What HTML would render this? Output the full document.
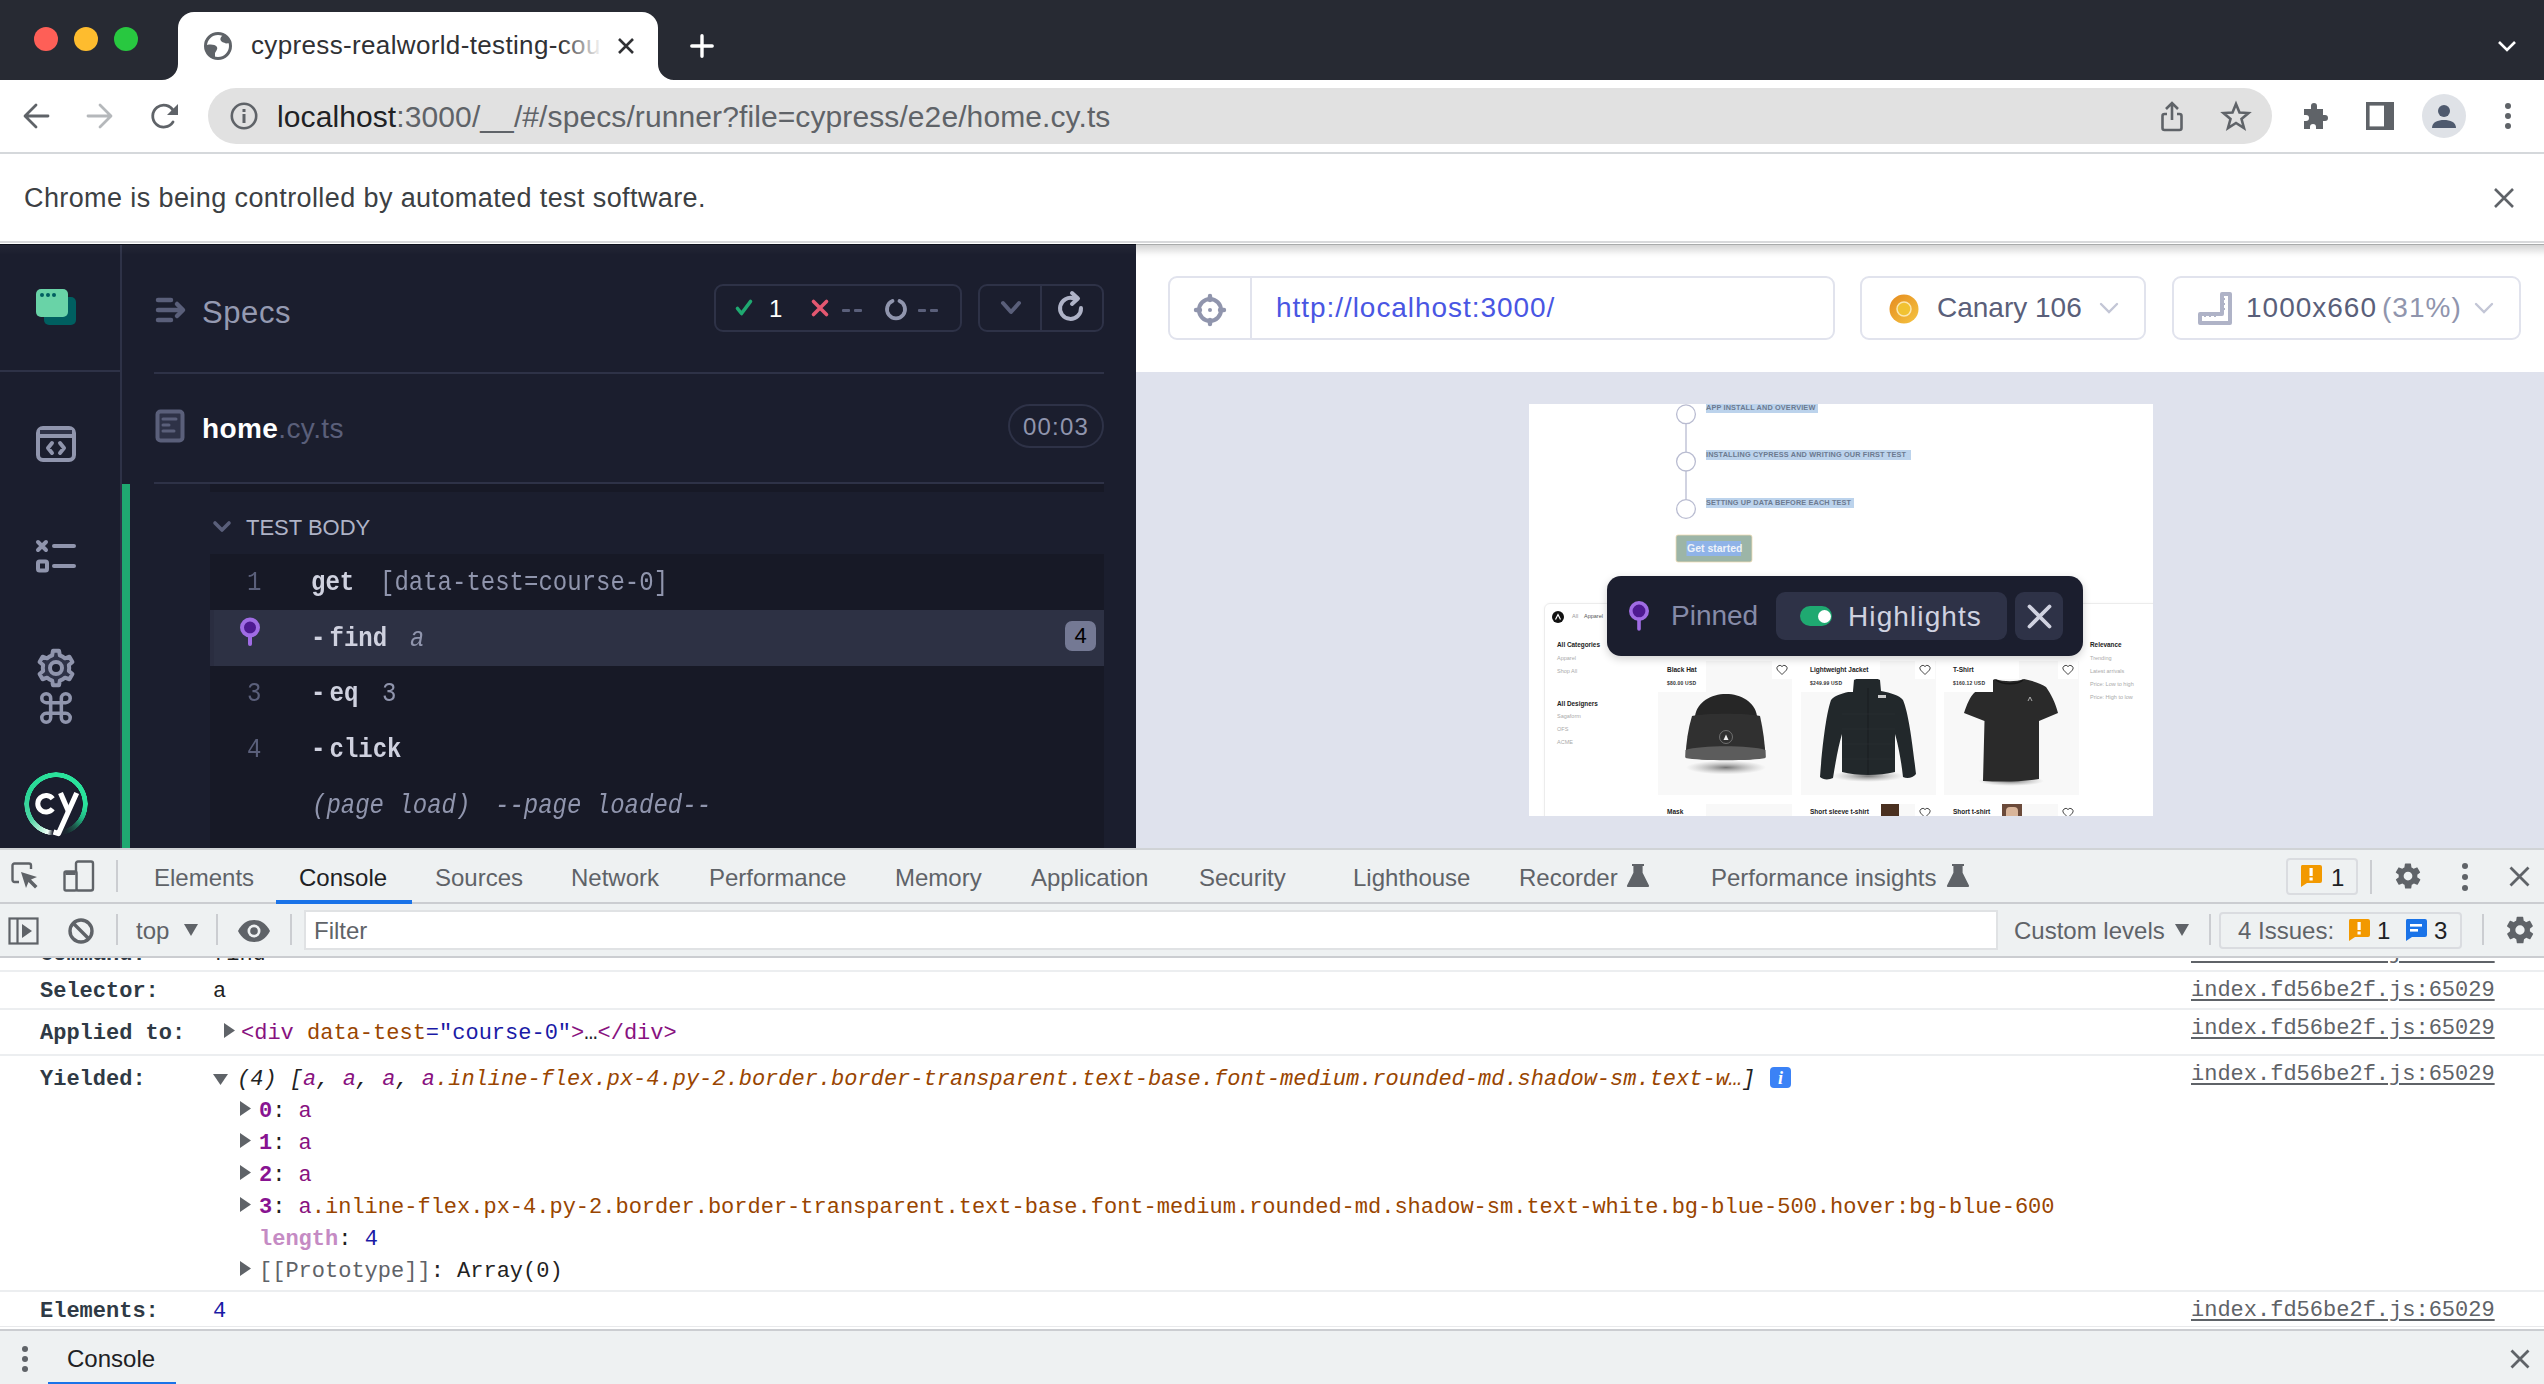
<!DOCTYPE html>
<html><head><meta charset="utf-8">
<style>
*{margin:0;padding:0;box-sizing:border-box}
html,body{width:2544px;height:1384px;overflow:hidden;background:#fff;font-family:"Liberation Sans",sans-serif}
.a{position:absolute}
.t{position:absolute;white-space:nowrap;line-height:1}
.m{font-family:"Liberation Mono",monospace}
svg{position:absolute;overflow:visible}
.dt{font-size:24px;color:#5f6368}
.cr{font-size:22px}
.cm{font-size:24px;line-height:24px;transform:scaleY(1.17);transform-origin:0 18.4px}
.b{font-weight:700;color:#cfd1df}
.lk{font-size:22px;color:#5f6368;text-decoration:underline;text-underline-offset:3px}
</style></head><body>

<!-- ===== TAB STRIP ===== -->
<div class="a" style="left:0;top:0;width:2544px;height:80px;background:#272a33"></div>
<div class="a" style="left:34px;top:27px;width:24px;height:24px;border-radius:50%;background:#fe5f57"></div>
<div class="a" style="left:74px;top:27px;width:24px;height:24px;border-radius:50%;background:#febc2e"></div>
<div class="a" style="left:114px;top:27px;width:24px;height:24px;border-radius:50%;background:#28c840"></div>
<!-- active tab -->
<div class="a" style="left:178px;top:12px;width:480px;height:68px;background:#fff;border-radius:16px 16px 0 0"></div>
<svg style="left:0;top:0" width="700" height="80" viewBox="0 0 700 80"><path d="M162 80L178 80L178 64A16 16 0 0 1 162 80Z M658 64L658 80L674 80A16 16 0 0 1 658 64Z" fill="#fff"/></svg>
<svg style="left:204px;top:32px" width="28" height="28" viewBox="0 0 28 28">
 <circle cx="14" cy="14" r="12.5" fill="none" stroke="#5f6368" stroke-width="3"/>
 <path d="M3 13 C7 12 11 12.5 13 15 C14 17 12 19 11 21 L11 26 C6 24 3 20 2 15Z" fill="#5f6368"/>
 <path d="M19 3 C17 5 16 6 16.5 8 C17 10 20 10.5 22 11.5 L26 11 C25 7 23 4.5 19 3Z" fill="#5f6368"/>
</svg>
<div id="ttl" class="t" style="left:251px;top:31.8px;font-size:26px;color:#303134;letter-spacing:0.35px">cypress-realworld-testing-cou</div>
<div class="a" style="left:560px;top:14px;width:50px;height:60px;background:linear-gradient(90deg,rgba(255,255,255,0),#fff 85%)"></div>
<svg style="left:618px;top:38px" width="16" height="16" viewBox="0 0 16 16"><path d="M1 1L15 15M15 1L1 15" stroke="#303134" stroke-width="2.6"/></svg>
<svg style="left:690px;top:34px" width="24" height="24" viewBox="0 0 24 24"><path d="M12 1.8V22.2M1.8 12H22.2" stroke="#fff" stroke-width="3.4" stroke-linecap="round"/></svg>
<svg style="left:2497px;top:40px" width="20" height="12" viewBox="0 0 20 12"><path d="M2 2L10 10L18 2" fill="none" stroke="#fff" stroke-width="2.6"/></svg>

<!-- ===== TOOLBAR ===== -->
<div class="a" style="left:0;top:152px;width:2544px;height:2px;background:#d5d8db"></div>
<svg style="left:23px;top:103px" width="26" height="26" viewBox="0 0 26 26"><path d="M25 13H3M13 2L2 13L13 24" fill="none" stroke="#5f6368" stroke-width="2.8" stroke-linecap="round" stroke-linejoin="round"/></svg>
<svg style="left:87px;top:103px" width="26" height="26" viewBox="0 0 26 26"><path d="M1 13H23M13 2L24 13L13 24" fill="none" stroke="#b5b8bb" stroke-width="2.8" stroke-linecap="round" stroke-linejoin="round"/></svg>
<svg style="left:151px;top:103px" width="28" height="28" viewBox="0 0 28 28"><path d="M22 19 A11 11 0 1 1 22.5 8" fill="none" stroke="#5f6368" stroke-width="2.8" stroke-linecap="round"/><path d="M27 1V12H16Z" fill="#5f6368"/></svg>
<div class="a" style="left:208px;top:88px;width:2064px;height:56px;border-radius:28px;background:#e1e1e1"></div>
<svg style="left:230px;top:102px" width="28" height="28" viewBox="0 0 28 28"><circle cx="14" cy="14" r="12.2" fill="none" stroke="#5f6368" stroke-width="2.6"/><rect x="12.5" y="7" width="3" height="3" fill="#5f6368"/><rect x="12.5" y="12" width="3" height="9" fill="#5f6368"/></svg>
<div id="urlb" class="t" style="left:277px;top:102.4px;font-size:30px;color:#202124;letter-spacing:0.1px">localhost<span style="color:#5f6368">:3000/__/#/specs/runner?file=cypress/e2e/home.cy.ts</span></div>
<svg style="left:2161px;top:101px" width="22" height="30" viewBox="0 0 22 30"><path d="M6 13H3.5A2 2 0 0 0 1.5 15V27A2 2 0 0 0 3.5 29H18.5A2 2 0 0 0 20.5 27V15A2 2 0 0 0 18.5 13H16" fill="none" stroke="#5f6368" stroke-width="2.6"/><path d="M11 19V2M5 8L11 2L17 8" fill="none" stroke="#5f6368" stroke-width="2.6"/></svg>
<svg style="left:2221px;top:101px" width="30" height="30" viewBox="0 0 30 30"><path d="M15 3L18.5 11.5L27.5 12L20.5 18L23 27L15 22L7 27L9.5 18L2.5 12L11.5 11.5Z" fill="none" stroke="#5f6368" stroke-width="2.6" stroke-linejoin="miter"/></svg>
<svg style="left:2302px;top:101px" width="29" height="29" viewBox="0 0 29 29"><path d="M2 8H9V5A3 3 0 0 1 15 5V8H21V14H23A3 3 0 0 1 23 20H21V28H14V26A3 3 0 0 0 8 26V28H2V20H4A3 3 0 0 0 4 14H2Z" fill="#5f6368"/></svg>
<svg style="left:2366px;top:102px" width="28" height="28" viewBox="0 0 28 28"><rect x="1.8" y="1.8" width="24.4" height="24.4" fill="none" stroke="#5f6368" stroke-width="3.6"/><rect x="18" y="1" width="9" height="26" fill="#5f6368"/></svg>
<div class="a" style="left:2422px;top:94px;width:44px;height:44px;border-radius:50%;background:#dfe2e7"></div>
<svg style="left:2422px;top:94px" width="44" height="44" viewBox="0 0 44 44"><circle cx="22" cy="17" r="6" fill="#4f5a6e"/><path d="M10 34C10 28 16 26 22 26C28 26 34 28 34 34Z" fill="#4f5a6e"/></svg>
<div class="a" style="left:2505px;top:103px;width:6px;height:6px;border-radius:50%;background:#5f6368"></div>
<div class="a" style="left:2505px;top:113px;width:6px;height:6px;border-radius:50%;background:#5f6368"></div>
<div class="a" style="left:2505px;top:123px;width:6px;height:6px;border-radius:50%;background:#5f6368"></div>

<!-- ===== INFOBAR ===== -->
<div id="info" class="t" style="left:24px;top:184.6px;font-size:27px;color:#3c4043;letter-spacing:0.4px">Chrome is being controlled by automated test software.</div>
<svg style="left:2494px;top:188px" width="20" height="20" viewBox="0 0 20 20"><path d="M1 1L19 19M19 1L1 19" stroke="#5f6368" stroke-width="2.6"/></svg>
<div class="a" style="left:0;top:241px;width:2544px;height:2px;background:#d8d9db"></div>

<!-- ===== CYPRESS ===== -->
<div class="a" style="left:0;top:244px;width:1136px;height:604px;background:#1b1e2e"></div>
<div class="a" style="left:120px;top:244px;width:2px;height:604px;background:#2e3247"></div>
<div class="a" style="left:0;top:244px;width:1136px;height:1px;background:#0e111c"></div>
<div class="a" style="left:0;top:245px;width:1136px;height:10px;background:linear-gradient(180deg,rgba(255,255,255,0.035),rgba(255,255,255,0))"></div>
<div class="a" style="left:0;top:370px;width:120px;height:2px;background:#2e3247"></div>
<!-- logo -->
<div class="a" style="left:44px;top:297px;width:32px;height:28px;border-radius:5px;background:#005f60"></div>
<div class="a" style="left:36px;top:289px;width:32px;height:28px;border-radius:5px;background:#69d3a7"></div>
<div class="a" style="left:40px;top:293px;width:4px;height:4px;border-radius:50%;background:#005f60"></div>
<div class="a" style="left:46px;top:293px;width:4px;height:4px;border-radius:50%;background:#005f60"></div>
<div class="a" style="left:52px;top:293px;width:4px;height:4px;border-radius:50%;background:#005f60"></div>
<!-- code icon -->
<svg style="left:34px;top:424px" width="44" height="40" viewBox="0 0 44 40">
 <rect x="4" y="4" width="36" height="32" rx="5" fill="none" stroke="#9095ad" stroke-width="4"/>
 <rect x="6" y="6" width="32" height="5" fill="#2e3247"/>
 <path d="M4 12H40" stroke="#9095ad" stroke-width="4"/>
 <path d="M18 19L14 24L18 29M26 19L30 24L26 29" fill="none" stroke="#9095ad" stroke-width="4" stroke-linecap="round" stroke-linejoin="round"/>
</svg>
<!-- list icon -->
<svg style="left:34px;top:538px" width="44" height="36" viewBox="0 0 44 36">
 <path d="M4 4L12 12M12 4L4 12" stroke="#9095ad" stroke-width="4" stroke-linecap="round"/>
 <path d="M20 8H40M20 28H40" stroke="#9095ad" stroke-width="4" stroke-linecap="round"/>
 <rect x="4" y="23.5" width="9" height="9" rx="1.5" fill="none" stroke="#9095ad" stroke-width="4"/>
</svg>
<!-- gear -->
<svg style="left:33.5px;top:646px" width="44" height="44" viewBox="0 0 44 44">
 <path d="M15.40 10.57 L18.14 9.38 L18.96 4.77 L25.04 4.77 L25.86 9.38 L28.60 10.57 L31.00 12.35 L35.41 10.75 L38.44 16.01 L34.86 19.03 L35.20 22.00 L34.86 24.97 L38.44 27.99 L35.41 33.25 L31.00 31.65 L28.60 33.43 L25.86 34.62 L25.04 39.23 L18.96 39.23 L18.14 34.62 L15.40 33.43 L13.00 31.65 L8.59 33.25 L5.56 27.99 L9.14 24.97 L8.80 22.00 L9.14 19.03 L5.56 16.01 L8.59 10.75 L13.00 12.35Z" fill="#2e3247" stroke="#9095ad" stroke-width="4" stroke-linejoin="round"/>
 <circle cx="22" cy="22" r="6" fill="#1b1e2e" stroke="#9095ad" stroke-width="4"/>
</svg>
<!-- command -->
<svg style="left:40px;top:692px" width="32" height="32" viewBox="0 0 36 36">
 <path d="M12 12V7A5 5 0 1 0 7 12H29A5 5 0 1 0 24 7V29A5 5 0 1 0 29 24H7A5 5 0 1 0 12 29Z" fill="none" stroke="#9095ad" stroke-width="4"/>
</svg>
<!-- cy logo -->
<div class="a" style="left:24px;top:772px;width:64px;height:64px;border-radius:50%;background:conic-gradient(from 0deg,#2ae39c 0deg,#2ae39c 95deg,#22b884 118deg,#1d5a4c 140deg,#1b2a32 158deg,#1b1e2e 172deg,#1b1e2e 186deg,#f0fff8 196deg,#a8ecd0 214deg,#4dd5a3 240deg,#2bd596 290deg,#2ae39c 360deg);-webkit-mask:radial-gradient(circle at center,transparent 26.5px,#000 27px,#000 31.5px,transparent 32px)"></div>
<svg style="left:20px;top:766px" width="72" height="74" viewBox="0 0 72 74">
 <path d="M32.7 32.8A8.3 8.3 0 1 0 32.7 42.8" fill="none" stroke="#fff" stroke-width="5"/>
 <path d="M40.5 27L48.3 45" fill="none" stroke="#fff" stroke-width="5.2"/>
 <path d="M56.7 27L38.5 67.5L33.5 66" fill="none" stroke="#fff" stroke-width="5.2" stroke-linejoin="round"/>
</svg>
<!-- reporter header -->
<svg style="left:154px;top:296px" width="34" height="28" viewBox="0 0 34 28">
 <path d="M4 4H17M4 24H17M4 14H27" stroke="#5a5f7a" stroke-width="4.5" stroke-linecap="round"/>
 <path d="M23 8L29 14L23 20" fill="none" stroke="#5a5f7a" stroke-width="4.5" stroke-linecap="round" stroke-linejoin="round"/>
</svg>
<div id="specs" class="t" style="left:202px;top:296.5px;font-size:31px;color:#959ab1;letter-spacing:0.6px">Specs</div>
<div class="a" style="left:714px;top:284px;width:248px;height:48px;border:2px solid #2e3247;border-radius:9px"></div>
<svg style="left:735px;top:299px" width="18" height="18" viewBox="0 0 18 18"><path d="M2.5 9.5L6.5 14.5L15.5 2.5" fill="none" stroke="#1fa971" stroke-width="3.6" stroke-linecap="round" stroke-linejoin="round"/></svg>
<div id="n1" class="t" style="left:769px;top:297px;font-size:24px;color:#fff">1</div>
<svg style="left:811px;top:299px" width="18" height="18" viewBox="0 0 18 18"><path d="M2.5 2.5L15.5 15.5M15.5 2.5L2.5 15.5" stroke="#e45770" stroke-width="3.6" stroke-linecap="round"/></svg>
<div class="a" style="left:842px;top:309px;width:8px;height:3px;background:#5a5f7a;border-radius:1px"></div>
<div class="a" style="left:854px;top:309px;width:8px;height:3px;background:#5a5f7a;border-radius:1px"></div>
<svg style="left:884px;top:297px" width="24" height="24" viewBox="0 0 24 24"><path d="M8.5 4A9 9 0 1 0 15.5 4" fill="none" stroke="#9095ad" stroke-width="3.8" stroke-linecap="round"/></svg>
<div class="a" style="left:918px;top:309px;width:8px;height:3px;background:#5a5f7a;border-radius:1px"></div>
<div class="a" style="left:930px;top:309px;width:8px;height:3px;background:#5a5f7a;border-radius:1px"></div>
<div class="a" style="left:978px;top:284px;width:126px;height:48px;border:2px solid #2e3247;border-radius:9px"></div>
<div class="a" style="left:1040px;top:285px;width:2px;height:46px;background:#2e3247"></div>
<svg style="left:1000px;top:300px" width="22" height="16" viewBox="0 0 22 16"><path d="M3 3L11 12L19 3" fill="none" stroke="#5a5f7a" stroke-width="4" stroke-linecap="round" stroke-linejoin="round"/></svg>
<svg style="left:1058px;top:290px" width="30" height="32" viewBox="0 0 30 32"><path d="M23 18A10.5 10.5 0 1 1 16 8.5" fill="none" stroke="#afb3c7" stroke-width="4" stroke-linecap="round"/><path d="M14 3L20 8.5L14 14" fill="none" stroke="#afb3c7" stroke-width="4" stroke-linecap="round" stroke-linejoin="round"/></svg>
<div class="a" style="left:154px;top:372px;width:950px;height:2px;background:#2e3247"></div>
<!-- spec file row -->
<svg style="left:154px;top:408px" width="32" height="36" viewBox="0 0 32 36">
 <rect x="3.5" y="3.5" width="25" height="29" rx="3" fill="#2e3247" stroke="#5a5f7a" stroke-width="4"/>
 <path d="M9 11H22M9 17H15M9 23H20" stroke="#5a5f7a" stroke-width="3" stroke-linecap="round"/>
</svg>
<div id="home" class="t" style="left:202px;top:415px;font-size:28px;color:#fff;font-weight:600;letter-spacing:0.4px">home<span style="color:#5a5f7a;font-weight:400">.cy.ts</span></div>
<div class="a" style="left:1008px;top:404px;width:96px;height:44px;border:2px solid #2e3247;border-radius:22px"></div>
<div id="dur" class="t" style="left:1023px;top:415px;font-size:24px;color:#9095ad;letter-spacing:1.2px">00:03</div>
<div class="a" style="left:154px;top:482px;width:950px;height:2px;background:#2e3247"></div>
<div class="a" style="left:122px;top:484px;width:8px;height:364px;background:#1fa971"></div>
<div class="a" style="left:210px;top:484px;width:894px;height:8px;background:#171926"></div>
<svg style="left:212px;top:520px" width="20" height="14" viewBox="0 0 20 14"><path d="M3 3L10 10L17 3" fill="none" stroke="#5a5f7a" stroke-width="3.6" stroke-linecap="round" stroke-linejoin="round"/></svg>
<div id="tb" class="t" style="left:246px;top:517px;font-size:22px;color:#afb3c7">TEST BODY</div>
<!-- commands -->
<div class="a" style="left:210px;top:554px;width:894px;height:294px;background:#171926"></div>
<div class="a" style="left:210px;top:610px;width:894px;height:56px;background:#2d3144"></div>
<div class="a" style="left:210px;top:610px;width:4px;height:56px;background:#2a2d40"></div>
<div class="t m cm" style="left:247px;top:571.6px;color:#5a5f7a">1</div>
<div id="c1" class="t m cm b" style="left:311px;top:571.6px">get</div>
<div id="c1m" class="t m cm" style="left:380px;top:571.6px;color:#9095ad">[data-test=course-0]</div>
<svg style="left:238px;top:616px" width="24" height="32" viewBox="0 0 24 32"><circle cx="12" cy="11.5" r="8" fill="#4e1a91" stroke="#a06ce4" stroke-width="4"/><path d="M12 19.5V28" stroke="#a06ce4" stroke-width="4" stroke-linecap="round"/></svg>
<div class="t m cm b" style="left:311px;top:627.6px">-</div>
<div id="c2" class="t m cm b" style="left:329.5px;top:627.6px">find</div>
<div class="t m cm" style="left:410px;top:627.6px;color:#9095ad;font-style:italic">a</div>
<div class="a" style="left:1065px;top:621px;width:31px;height:30px;border-radius:7px;background:#747994"></div>
<div class="t" style="left:1065px;top:625px;width:31px;text-align:center;font-size:22px;color:#000">4</div>
<div class="t m cm" style="left:247px;top:682.6px;color:#5a5f7a">3</div>
<div class="t m cm b" style="left:311px;top:682.6px">-</div>
<div class="t m cm b" style="left:329.5px;top:682.6px">eq</div>
<div class="t m cm" style="left:382px;top:682.6px;color:#9095ad">3</div>
<div class="t m cm" style="left:247px;top:738.9px;color:#5a5f7a">4</div>
<div class="t m cm b" style="left:311px;top:738.9px">-</div>
<div class="t m cm b" style="left:329.5px;top:738.9px">click</div>
<div id="pl" class="t m cm" style="left:312px;top:795px;color:#9095ad;font-style:italic">(page load)</div>
<div id="pl2" class="t m cm" style="left:495px;top:795px;color:#9095ad;font-style:italic">--page loaded--</div>

<!-- AUT header -->
<div class="a" style="left:1136px;top:244px;width:1408px;height:128px;background:#fff"></div>
<div class="a" style="left:1136px;top:245px;width:1408px;height:13px;background:linear-gradient(180deg,rgba(0,0,0,0.17),rgba(0,0,0,0.02) 75%,rgba(0,0,0,0))"></div>
<div class="a" style="left:1136px;top:244px;width:1408px;height:1px;background:#a9abab"></div>
<div class="a" style="left:1168px;top:276px;width:667px;height:64px;border:2px solid #e1e3ed;border-radius:9px"></div>
<div class="a" style="left:1250px;top:277px;width:2px;height:62px;background:#e1e3ed"></div>
<svg style="left:1193px;top:293px" width="34" height="34" viewBox="0 0 34 34"><circle cx="17" cy="17" r="11" fill="none" stroke="#9095ad" stroke-width="4"/><path d="M17 3V7M17 27V31M3 17H7M27 17H31" stroke="#9095ad" stroke-width="4.4" stroke-linecap="round"/><circle cx="17" cy="17" r="2" fill="#9095ad"/></svg>
<div id="url" class="t" style="left:1276px;top:294px;font-size:28px;color:#4956e3;letter-spacing:0.95px">http://localhost:3000/</div>
<div class="a" style="left:1860px;top:276px;width:286px;height:64px;border:2px solid #e1e3ed;border-radius:9px"></div>
<svg style="left:1889px;top:294px" width="30" height="30" viewBox="0 0 30 30">
 <defs><linearGradient id="cang" x1="0" y1="0" x2="1" y2="1"><stop offset="0" stop-color="#e58a1e"/><stop offset="1" stop-color="#f5c542"/></linearGradient></defs>
 <circle cx="15" cy="15" r="14.5" fill="url(#cang)"/><circle cx="15" cy="15" r="7" fill="#f1c232" stroke="#fbe7b0" stroke-width="1.5"/>
</svg>
<div id="can" class="t" style="left:1937px;top:294px;font-size:28px;color:#5a5f7a">Canary 106</div>
<svg style="left:2099px;top:302px" width="20" height="12" viewBox="0 0 20 12"><path d="M2 2L10 10L18 2" fill="none" stroke="#c3c6d6" stroke-width="2.4" stroke-linecap="round"/></svg>
<div class="a" style="left:2172px;top:276px;width:349px;height:64px;border:2px solid #e1e3ed;border-radius:9px"></div>
<svg style="left:2198px;top:291px" width="34" height="34" viewBox="0 0 34 34"><path d="M24 3H32V32H2V23H24Z" fill="none" stroke="#afb3c7" stroke-width="4" stroke-linejoin="round"/><path d="M27 8H24M27 13H25M27 18H24M7 26V23M12 26V24M17 26V23" stroke="#afb3c7" stroke-width="2"/></svg>
<div id="vp" class="t" style="left:2246px;top:294px;font-size:28px;color:#5a5f7a;letter-spacing:1px"><span id="vp1">1000x660</span><span id="vp2" style="color:#9095ad;margin-left:5px">(31%)</span></div>
<svg style="left:2474px;top:302px" width="20" height="12" viewBox="0 0 20 12"><path d="M2 2L10 10L18 2" fill="none" stroke="#c3c6d6" stroke-width="2.4" stroke-linecap="round"/></svg>
<div class="a" style="left:1136px;top:372px;width:1408px;height:476px;background:#dfe2ed"></div>
<!-- AUT viewport -->
<div id="aut" class="a" style="left:1529px;top:404px;width:624px;height:412px;background:#fff;overflow:hidden">
 <svg style="left:0;top:0" width="624" height="412" viewBox="0 0 624 412">
  <g fill="none" stroke="#b9bcd1" stroke-width="1.3">
   <circle cx="157" cy="10.3" r="9.4"/><circle cx="157" cy="57.6" r="9.4"/><circle cx="157" cy="105" r="9.4"/>
   <path d="M157 19.7V48.2M157 67V95.6"/>
  </g>
  <rect x="177" y="0" width="112" height="9" fill="#bcd3ec"/>
  <rect x="177" y="46" width="205" height="10" fill="#bcd3ec"/>
  <rect x="177" y="94" width="148" height="10" fill="#bcd3ec"/>
  <rect x="147" y="131" width="76" height="27" rx="2" fill="#9cb5a7" stroke="#f0dcb4" stroke-width="0.8"/>
  <rect x="157.5" y="137" width="54.5" height="15" fill="#8fb3e8"/>
 </svg>
 <div class="t" style="left:177px;top:0px;font-size:7.3px;font-weight:700;color:#6c7a90;letter-spacing:0.15px">APP INSTALL AND OVERVIEW</div>
 <div class="t" style="left:177px;top:47px;font-size:7.3px;font-weight:700;color:#6c7a90;letter-spacing:0.15px">INSTALLING CYPRESS AND WRITING OUR FIRST TEST</div>
 <div class="t" style="left:177px;top:95px;font-size:7.3px;font-weight:700;color:#6c7a90;letter-spacing:0.15px">SETTING UP DATA BEFORE EACH TEST</div>
 <div class="t" style="left:158px;top:139px;font-size:10.5px;font-weight:700;color:#eef2f8">Get started</div>
 <!-- store -->
 <div class="a" style="left:15px;top:199px;width:640px;height:260px;border:1px solid #ececec;border-radius:6px;box-shadow:0 0 3px rgba(0,0,0,0.04)"></div>
 <div class="a" style="left:22.5px;top:207px;width:12px;height:12px;border-radius:50%;background:#111"></div>
 <svg style="left:24.5px;top:209px" width="8" height="8" viewBox="0 0 8 8"><path d="M1.5 6.5L4 1.5L6.5 6.5" fill="none" stroke="#fff" stroke-width="1.2"/></svg>
 <div class="t" style="left:43px;top:210px;font-size:5.5px;color:#999">All</div>
 <div class="t" style="left:55px;top:210px;font-size:5.5px;color:#555">Apparel</div>
 <div class="t" style="left:28px;top:237.5px;font-size:6.4px;font-weight:700;color:#222">All Categories</div>
 <div class="t" style="left:28px;top:252px;font-size:5.5px;color:#aaa">Apparel</div>
 <div class="t" style="left:28px;top:265px;font-size:5.5px;color:#aaa">Shop All</div>
 <div class="t" style="left:28px;top:296.5px;font-size:6.4px;font-weight:700;color:#222">All Designers</div>
 <div class="t" style="left:28px;top:310px;font-size:5.5px;color:#aaa">Sagaform</div>
 <div class="t" style="left:28px;top:323px;font-size:5.5px;color:#aaa">OFS</div>
 <div class="t" style="left:28px;top:336px;font-size:5.5px;color:#aaa">ACME</div>
 <div class="t" style="left:561px;top:237.5px;font-size:6.4px;font-weight:700;color:#222">Relevance</div>
 <div class="t" style="left:561px;top:252px;font-size:5.5px;color:#aaa">Trending</div>
 <div class="t" style="left:561px;top:265px;font-size:5.5px;color:#aaa">Latest arrivals</div>
 <div class="t" style="left:561px;top:278px;font-size:5.5px;color:#aaa">Price: Low to high</div>
 <div class="t" style="left:561px;top:291px;font-size:5.5px;color:#aaa">Price: High to low</div>
 <!-- cards -->
 <div class="a" style="left:129px;top:257px;width:134px;height:134px;background:#f8f8f8"></div>
 <div class="a" style="left:272px;top:257px;width:135px;height:134px;background:#f8f8f8"></div>
 <div class="a" style="left:415px;top:257px;width:135px;height:134px;background:#f8f8f8"></div>
 <svg style="left:0;top:0" width="624" height="412" viewBox="0 0 624 412">
  <defs>
   <radialGradient id="shd" cx="0.5" cy="0.5" r="0.5"><stop offset="0" stop-color="#555" stop-opacity="0.8"/><stop offset="1" stop-color="#999" stop-opacity="0"/></radialGradient>
  </defs>
  <!-- hat -->
  <ellipse cx="197" cy="363.5" rx="40" ry="7" fill="url(#shd)"/>
  <path d="M166 312C168 298 182 290 197 290C212 290 226 298 228 312Z" fill="#262626"/>
  <path d="M163 312C175 309 219 309 231 312C234 325 236 340 236.5 353C225 357 170 357 156.5 353C157 340 159 325 163 312Z" fill="#303030"/>
  <path d="M156.5 346C172 341 221 341 236.5 346L236.5 354C225 357 170 357 156.5 354Z" fill="#5c5c5c"/>
  <circle cx="197" cy="333" r="6.5" fill="none" stroke="#999" stroke-width="0.6"/>
  <path d="M194.5 336L197 330.5L199.5 336Z" fill="#eee"/>
  <!-- jacket -->
  <ellipse cx="339" cy="372" rx="36" ry="6" fill="url(#shd)"/>
  <path d="M325 276C330 273 346 273 351 276L352 287C362 289 370 291 374 296C380 310 384 345 387 370C384 374 378 375 374 373C372 355 369 340 366 330L366 368C350 372 328 372 313 368L313 330C310 340 307 355 304 374C300 376 294 376 291 373C293 345 297 310 302 296C306 291 314 289 324 287Z" fill="#22282b"/>
  <path d="M339 284V370" stroke="#15181a" stroke-width="0.7"/>
  <path d="M313 310H366M313 325H366M313 340H366M313 355H366" stroke="#2b3034" stroke-width="0.6"/>
  <rect x="349" y="291" width="8" height="3" fill="#ccc"/>
  <!-- tshirt -->
  <ellipse cx="482" cy="377" rx="33" ry="5" fill="url(#shd)"/>
  <path d="M466 275C475 278 487 278 495 275C505 277 513 280 517 283C522 290 526 298 529 309L510 317L510 375C492 378 470 378 454 377L455.5 317L435 309C438 300 441 293 445 289C452 283 459 278 466 275Z" fill="#2a2a2a"/>
  <path d="M467 276C474 281 488 281 494 276" fill="none" stroke="#161616" stroke-width="1.5"/>
  <path d="M499 297L501 293L503 297" fill="none" stroke="#ccc" stroke-width="0.8"/>
 </svg>
 <div class="a" style="left:129px;top:257px;width:48px;height:31px;background:#fff"></div>
 <div class="a" style="left:272px;top:257px;width:52px;height:31px;background:#fff"></div><div class="a" style="left:272px;top:257px;width:79px;height:18px;background:#fff"></div>
 <div class="a" style="left:415px;top:257px;width:49px;height:31px;background:#fff"></div><div class="a" style="left:415px;top:257px;width:75px;height:18px;background:#fff"></div>
 <div class="a" style="left:243px;top:257px;width:20px;height:18px;background:#fff"></div>
 <div class="a" style="left:386px;top:257px;width:20px;height:18px;background:#fff"></div>
 <div class="a" style="left:529px;top:257px;width:20px;height:18px;background:#fff"></div>
 <div class="t" style="left:138px;top:263px;font-size:6.5px;font-weight:700;color:#222">Black Hat</div>
 <div class="t" style="left:138px;top:277px;font-size:5px;font-weight:700;color:#333;letter-spacing:0.2px">$80.00 USD</div>
 <div class="t" style="left:281px;top:263px;font-size:6.5px;font-weight:700;color:#222">Lightweight Jacket</div>
 <div class="t" style="left:281px;top:277px;font-size:5px;font-weight:700;color:#333;letter-spacing:0.2px">$249.99 USD</div>
 <div class="t" style="left:424px;top:263px;font-size:6.5px;font-weight:700;color:#222">T-Shirt</div>
 <div class="t" style="left:424px;top:277px;font-size:5px;font-weight:700;color:#333;letter-spacing:0.2px">$160.12 USD</div>
 <svg style="left:0;top:0" width="624" height="420" viewBox="0 0 624 420">
  <g fill="none" stroke="#333" stroke-width="0.9">
   <path d="M253 270.5L248.5 266A2.5 2.5 0 0 1 253 262.5A2.5 2.5 0 0 1 257.5 266Z"/>
   <path d="M396 270.5L391.5 266A2.5 2.5 0 0 1 396 262.5A2.5 2.5 0 0 1 400.5 266Z"/>
   <path d="M539 270.5L534.5 266A2.5 2.5 0 0 1 539 262.5A2.5 2.5 0 0 1 543.5 266Z"/>
   <path d="M253 413.5L248.5 409A2.5 2.5 0 0 1 253 405.5A2.5 2.5 0 0 1 257.5 409Z"/>
   <path d="M396 413.5L391.5 409A2.5 2.5 0 0 1 396 405.5A2.5 2.5 0 0 1 400.5 409Z"/>
   <path d="M539 413.5L534.5 409A2.5 2.5 0 0 1 539 405.5A2.5 2.5 0 0 1 543.5 409Z"/>
  </g>
 </svg>
 <!-- row 2 -->
 <div class="a" style="left:177px;top:400px;width:86px;height:12px;background:#f8f8f8"></div>
 <div class="a" style="left:352px;top:400px;width:34px;height:12px;background:#f8f8f8"></div>
 <div class="a" style="left:352px;top:400px;width:18px;height:12px;background:#4a3020"></div>
 <div class="a" style="left:481px;top:400px;width:48px;height:12px;background:#f8f8f8"></div>
 <div class="a" style="left:473px;top:400px;width:20px;height:12px;background:#6b4a3a"></div>
 <div class="a" style="left:477px;top:403px;width:12px;height:9px;border-radius:4px 4px 0 0;background:#d9b59a"></div>
 <div class="t" style="left:138px;top:405px;font-size:6.5px;font-weight:700;color:#222">Mask</div>
 <div class="t" style="left:281px;top:405px;font-size:6.5px;font-weight:700;color:#222">Short sleeve t-shirt</div>
 <div class="t" style="left:424px;top:405px;font-size:6.5px;font-weight:700;color:#222">Short t-shirt</div>
</div>
<!-- pinned popup -->
<div class="a" style="left:1607px;top:576px;width:476px;height:80px;border-radius:14px;background:#1b1e2e;box-shadow:0 3px 8px rgba(0,0,0,0.18)"></div>
<svg style="left:1626px;top:599px" width="26" height="34" viewBox="0 0 26 34"><circle cx="13" cy="12" r="8.2" fill="#4e1a91" stroke="#a06ce4" stroke-width="3.6"/><path d="M13 20V30" stroke="#a06ce4" stroke-width="3.6" stroke-linecap="round"/></svg>
<div id="pin" class="t" style="left:1671px;top:601.5px;font-size:28px;color:#868ba8">Pinned</div>
<div class="a" style="left:1776px;top:592px;width:231px;height:48px;border-radius:9px;background:#2e3247"></div>
<div class="a" style="left:1800px;top:606px;width:32px;height:20px;border-radius:10px;background:#1fa971"></div>
<div class="a" style="left:1817.5px;top:609.5px;width:13px;height:13px;border-radius:50%;background:#fff"></div>
<div id="hl" class="t" style="left:1848px;top:603px;font-size:28px;color:#d0d2e0;letter-spacing:1.1px">Highlights</div>
<div class="a" style="left:2015px;top:592px;width:48px;height:48px;border-radius:9px;background:#2e3247"></div>
<svg style="left:2027px;top:604px" width="25" height="25" viewBox="0 0 25 25"><path d="M2.5 2.5L22.5 22.5M22.5 2.5L2.5 22.5" stroke="#d0d2e0" stroke-width="3.8" stroke-linecap="round"/></svg>

<!-- ===== DEVTOOLS ===== -->
<div class="a" style="left:0;top:848px;width:2544px;height:536px;background:#fff"></div>
<div class="a" style="left:0;top:848px;width:2544px;height:56px;background:#eef1f2;border-top:2px solid #d0d3d6;border-bottom:2px solid #cbcdd1"></div>
<svg style="left:10px;top:861px" width="30" height="30" viewBox="0 0 30 30"><path d="M9 21H4.5A2 2 0 0 1 2.5 19V4.5A2 2 0 0 1 4.5 2.5H19A2 2 0 0 1 21 4.5V8" fill="none" stroke="#5f6368" stroke-width="2.4"/><path d="M11 11L16 27L18.5 21L25 27.5L27.5 25L21 18.5L27 16Z" fill="#5f6368"/></svg>
<svg style="left:62px;top:859px" width="34" height="34" viewBox="0 0 34 34"><rect x="14" y="2.5" width="17" height="29" rx="2" fill="none" stroke="#5f6368" stroke-width="2.4"/><rect x="2.5" y="12.5" width="12" height="19" rx="1.5" fill="#eef1f2" stroke="#5f6368" stroke-width="2.4"/><rect x="3.5" y="12.5" width="10" height="3.5" fill="#5f6368"/></svg>
<div class="a" style="left:116px;top:860px;width:2px;height:32px;background:#cbcdd1"></div>
<div id="tel" class="t dt" style="left:154px;top:866px">Elements</div>
<div class="t dt" style="left:299px;top:866px;color:#202124">Console</div>
<div class="a" style="left:276px;top:900px;width:136px;height:4px;background:#1a73e8"></div>
<div class="t dt" style="left:435px;top:866px">Sources</div>
<div class="t dt" style="left:571px;top:866px">Network</div>
<div class="t dt" style="left:709px;top:866px">Performance</div>
<div class="t dt" style="left:895px;top:866px">Memory</div>
<div class="t dt" style="left:1031px;top:866px">Application</div>
<div class="t dt" style="left:1199px;top:866px">Security</div>
<div class="t dt" style="left:1353px;top:866px">Lighthouse</div>
<div id="trec" class="t dt" style="left:1519px;top:866px">Recorder</div>
<svg style="left:1627px;top:864px" width="22" height="24" viewBox="0 0 22 24"><path d="M5 1H17M7.5 1V9L1 22H21L14.5 9V1" fill="#5f6368" stroke="#5f6368" stroke-width="2.2" stroke-linejoin="round"/></svg>
<div id="tpi" class="t dt" style="left:1711px;top:866px">Performance insights</div>
<svg style="left:1947px;top:864px" width="22" height="24" viewBox="0 0 22 24"><path d="M5 1H17M7.5 1V9L1 22H21L14.5 9V1" fill="#5f6368" stroke="#5f6368" stroke-width="2.2" stroke-linejoin="round"/></svg>
<div class="a" style="left:2286px;top:858px;width:72px;height:37px;border:2px solid #dadce0;border-radius:4px"></div>
<svg style="left:2299px;top:864px" width="24" height="24" viewBox="0 0 24 24"><path d="M3 1H21A2 2 0 0 1 23 3V17A2 2 0 0 1 21 19H8L2 23V3A2 2 0 0 1 3 1Z" fill="#f29900"/><rect x="10.5" y="4" width="3.2" height="8" fill="#fff"/><rect x="10.5" y="13.5" width="3.2" height="3" fill="#fff"/></svg>
<div class="t dt" style="left:2331px;top:866px;color:#202124">1</div>
<div class="a" style="left:2370px;top:860px;width:2px;height:34px;background:#cbcdd1"></div>
<svg style="left:2392px;top:861px" width="32" height="30" viewBox="0 0 24 24"><path fill="#5f6368" d="M19.4 13a7.8 7.8 0 0 0 0-2l2.1-1.6a.5.5 0 0 0 .1-.6l-2-3.5a.5.5 0 0 0-.6-.2l-2.5 1a7.3 7.3 0 0 0-1.7-1l-.4-2.6A.5.5 0 0 0 14 2h-4a.5.5 0 0 0-.5.4l-.4 2.7a7.6 7.6 0 0 0-1.7 1l-2.5-1a.5.5 0 0 0-.6.2l-2 3.5a.5.5 0 0 0 .1.6L4.6 11a7.8 7.8 0 0 0 0 2l-2.1 1.6a.5.5 0 0 0-.1.6l2 3.5a.5.5 0 0 0 .6.2l2.5-1a7.3 7.3 0 0 0 1.7 1l.4 2.7a.5.5 0 0 0 .5.4h4a.5.5 0 0 0 .5-.4l.4-2.7a7.6 7.6 0 0 0 1.7-1l2.5 1a.5.5 0 0 0 .6-.2l2-3.5a.5.5 0 0 0-.1-.6zM12 15.5a3.5 3.5 0 1 1 0-7 3.5 3.5 0 0 1 0 7z"/></svg>
<div class="a" style="left:2462px;top:863px;width:6px;height:6px;border-radius:50%;background:#5f6368"></div>
<div class="a" style="left:2462px;top:874px;width:6px;height:6px;border-radius:50%;background:#5f6368"></div>
<div class="a" style="left:2462px;top:885px;width:6px;height:6px;border-radius:50%;background:#5f6368"></div>
<svg style="left:2509px;top:866px" width="21" height="21" viewBox="0 0 21 21"><path d="M1.5 1.5L19.5 19.5M19.5 1.5L1.5 19.5" stroke="#5f6368" stroke-width="2.8"/></svg>

<!-- console toolbar -->
<div class="a" style="left:0;top:904px;width:2544px;height:54px;background:#eef1f2;border-bottom:2px solid #cbcdd1"></div>
<svg style="left:8px;top:917px" width="32" height="28" viewBox="0 0 32 28"><rect x="1.5" y="1.5" width="28" height="25" fill="none" stroke="#5f6368" stroke-width="2.2"/><path d="M9.5 1.5V26.5" stroke="#5f6368" stroke-width="2.2"/><path d="M14 7L24 14L14 21Z" fill="#5f6368"/></svg>
<svg style="left:67px;top:917px" width="28" height="28" viewBox="0 0 28 28"><circle cx="14" cy="14" r="11" fill="none" stroke="#5f6368" stroke-width="3.4"/><path d="M6.5 6.5L21.5 21.5" stroke="#5f6368" stroke-width="3.4"/></svg>
<div class="a" style="left:116px;top:914px;width:2px;height:31px;background:#cbcdd1"></div>
<div class="t dt" style="left:136px;top:919px">top</div>
<svg style="left:184px;top:924px" width="14" height="12" viewBox="0 0 14 12"><path d="M0 0H14L7 12Z" fill="#5f6368"/></svg>
<div class="a" style="left:216px;top:914px;width:2px;height:31px;background:#cbcdd1"></div>
<svg style="left:237px;top:919px" width="34" height="24" viewBox="0 0 34 24"><path d="M1 12C5 4 11 1 17 1C23 1 29 4 33 12C29 20 23 23 17 23C11 23 5 20 1 12Z" fill="#5f6368"/><circle cx="17" cy="12" r="6.5" fill="#eef1f2"/><circle cx="17" cy="12" r="3.8" fill="#5f6368"/></svg>
<div class="a" style="left:290px;top:914px;width:2px;height:31px;background:#cbcdd1"></div>
<div class="a" style="left:304px;top:910px;width:1694px;height:40px;background:#fff;border:2px solid #e0e2e4"></div>
<div class="t dt" style="left:314px;top:919px">Filter</div>
<div id="cl" class="t dt" style="left:2014px;top:919px">Custom levels</div>
<svg style="left:2175px;top:924px" width="14" height="12" viewBox="0 0 14 12"><path d="M0 0H14L7 12Z" fill="#5f6368"/></svg>
<div class="a" style="left:2209px;top:914px;width:2px;height:31px;background:#cbcdd1"></div>
<div class="a" style="left:2219px;top:912px;width:243px;height:37px;border:2px solid #dadce0;border-radius:4px"></div>
<div id="iss" class="t dt" style="left:2238px;top:919px">4 Issues:</div>
<svg style="left:2347px;top:918px" width="24" height="24" viewBox="0 0 24 24"><path d="M3 1H21A2 2 0 0 1 23 3V17A2 2 0 0 1 21 19H8L2 23V3A2 2 0 0 1 3 1Z" fill="#f29900"/><rect x="10.5" y="4" width="3.2" height="8" fill="#fff"/><rect x="10.5" y="13.5" width="3.2" height="3" fill="#fff"/></svg>
<div class="t dt" style="left:2377px;top:919px;color:#202124">1</div>
<svg style="left:2404px;top:918px" width="24" height="24" viewBox="0 0 24 24"><path d="M3 1H21A2 2 0 0 1 23 3V17A2 2 0 0 1 21 19H8L2 23V3A2 2 0 0 1 3 1Z" fill="#1a73e8"/><rect x="6" y="6" width="12" height="2.6" fill="#fff"/><rect x="6" y="11" width="8" height="2.6" fill="#fff"/></svg>
<div class="t dt" style="left:2434px;top:919px;color:#202124">3</div>
<div class="a" style="left:2482px;top:914px;width:2px;height:31px;background:#cbcdd1"></div>
<svg style="left:2504px;top:914px" width="32" height="32" viewBox="0 0 24 24"><path fill="#5f6368" d="M19.4 13a7.8 7.8 0 0 0 0-2l2.1-1.6a.5.5 0 0 0 .1-.6l-2-3.5a.5.5 0 0 0-.6-.2l-2.5 1a7.3 7.3 0 0 0-1.7-1l-.4-2.6A.5.5 0 0 0 14 2h-4a.5.5 0 0 0-.5.4l-.4 2.7a7.6 7.6 0 0 0-1.7 1l-2.5-1a.5.5 0 0 0-.6.2l-2 3.5a.5.5 0 0 0 .1.6L4.6 11a7.8 7.8 0 0 0 0 2l-2.1 1.6a.5.5 0 0 0-.1.6l2 3.5a.5.5 0 0 0 .6.2l2.5-1a7.3 7.3 0 0 0 1.7 1l.4 2.7a.5.5 0 0 0 .5.4h4a.5.5 0 0 0 .5-.4l.4-2.7a7.6 7.6 0 0 0 1.7-1l2.5 1a.5.5 0 0 0 .6-.2l2-3.5a.5.5 0 0 0-.1-.6zM12 15.5a3.5 3.5 0 1 1 0-7 3.5 3.5 0 0 1 0 7z"/></svg>

<!-- console rows -->
<div class="a" style="left:0;top:958px;width:2544px;height:372px;overflow:hidden;background:#fff">
 <div class="t m cr" style="left:40px;top:-14px;font-weight:700;color:#2f3a45">Command:</div>
 <div class="t m cr" style="left:213px;top:-14px;color:#222">find</div>
 <div class="t m lk" style="left:2191px;top:-16px">index.fd56be2f.js:65029</div>
 <div class="a" style="left:0;top:12px;width:2544px;height:2px;background:#eceef0"></div>
 <div id="sel" class="t m cr" style="left:40px;top:23px;font-weight:700;color:#2f3a45">Selector:</div>
 <div class="t m cr" style="left:213px;top:23px;color:#222">a</div>
 <div class="t m lk" style="left:2191px;top:22px">index.fd56be2f.js:65029</div>
 <div class="a" style="left:0;top:50px;width:2544px;height:2px;background:#eceef0"></div>
 <div class="t m cr" style="left:40px;top:65px;font-weight:700;color:#2f3a45">Applied to:</div>
 <svg style="left:224px;top:65px" width="12" height="15" viewBox="0 0 12 15"><path d="M0 0L11 7.5L0 15Z" fill="#5f6368"/></svg>
 <div class="t m cr" style="left:241px;top:65px;color:#881280">&lt;div <span style="color:#994500">data-test</span><span style="color:#1a1aa6">=</span><span style="color:#1a1aa6">"course-0"</span>&gt;<span style="color:#222">…</span>&lt;/div&gt;</div>
 <div class="t m lk" style="left:2191px;top:60px">index.fd56be2f.js:65029</div>
 <div class="a" style="left:0;top:96px;width:2544px;height:2px;background:#eceef0"></div>
 <div class="t m cr" style="left:40px;top:111px;font-weight:700;color:#2f3a45">Yielded:</div>
 <svg style="left:213px;top:116px" width="15" height="11" viewBox="0 0 15 11"><path d="M0 0H15L7.5 11Z" fill="#5f6368"/></svg>
 <div id="yl" class="t m cr" style="left:237px;top:111px;color:#222;font-style:italic">(4) [<span style="color:#881280">a</span>, <span style="color:#881280">a</span>, <span style="color:#881280">a</span>, <span style="color:#881280">a</span><span style="color:#994500">.inline-flex.px-4.py-2.border.border-transparent.text-base.font-medium.rounded-md.shadow-sm.text-w…</span>]</div>
 <div class="a" style="left:1770px;top:109px;width:21px;height:21px;border-radius:4px;background:#3b82f6"></div>
 <div class="t" style="left:1770px;top:111px;width:21px;text-align:center;font-family:'Liberation Serif',serif;font-style:italic;font-weight:700;font-size:18px;color:#fff">i</div>
 <div class="t m lk" style="left:2191px;top:106px">index.fd56be2f.js:65029</div>
 <svg style="left:240px;top:143px" width="12" height="15" viewBox="0 0 12 15"><path d="M0 0L11 7.5L0 15Z" fill="#5f6368"/></svg>
 <div class="t m cr" style="left:259px;top:143px;color:#222"><b style="color:#881391">0</b>: <span style="color:#881280">a</span></div>
 <svg style="left:240px;top:175px" width="12" height="15" viewBox="0 0 12 15"><path d="M0 0L11 7.5L0 15Z" fill="#5f6368"/></svg>
 <div class="t m cr" style="left:259px;top:175px;color:#222"><b style="color:#881391">1</b>: <span style="color:#881280">a</span></div>
 <svg style="left:240px;top:207px" width="12" height="15" viewBox="0 0 12 15"><path d="M0 0L11 7.5L0 15Z" fill="#5f6368"/></svg>
 <div class="t m cr" style="left:259px;top:207px;color:#222"><b style="color:#881391">2</b>: <span style="color:#881280">a</span></div>
 <svg style="left:240px;top:239px" width="12" height="15" viewBox="0 0 12 15"><path d="M0 0L11 7.5L0 15Z" fill="#5f6368"/></svg>
 <div id="r3" class="t m cr" style="left:259px;top:239px;color:#222"><b style="color:#881391">3</b>: <span style="color:#881280">a</span><span style="color:#994500">.inline-flex.px-4.py-2.border.border-transparent.text-base.font-medium.rounded-md.shadow-sm.text-white.bg-blue-500.hover:bg-blue-600</span></div>
 <div class="t m cr" style="left:259px;top:271px;color:#222"><b style="color:#c58bc4">length</b>: <span style="color:#1a1aa6">4</span></div>
 <svg style="left:240px;top:303px" width="12" height="15" viewBox="0 0 12 15"><path d="M0 0L11 7.5L0 15Z" fill="#5f6368"/></svg>
 <div class="t m cr" style="left:259px;top:303px;color:#222"><span style="color:#5f6368">[[Prototype]]</span>: Array(0)</div>
 <div class="a" style="left:0;top:332px;width:2544px;height:2px;background:#eceef0"></div>
 <div class="t m cr" style="left:40px;top:343px;font-weight:700;color:#2f3a45">Elements:</div>
 <div class="t m cr" style="left:213px;top:343px;color:#1a1aa6">4</div>
 <div class="t m lk" style="left:2191px;top:342px">index.fd56be2f.js:65029</div>
</div>
<div class="a" style="left:0;top:1326px;width:2544px;height:1px;background:#e8e9eb"></div>
<!-- drawer -->
<div class="a" style="left:0;top:1329px;width:2544px;height:55px;background:#eef1f2;border-top:2px solid #cbcdd1"></div>
<div class="a" style="left:22px;top:1346px;width:6px;height:6px;border-radius:50%;background:#5f6368"></div>
<div class="a" style="left:22px;top:1356px;width:6px;height:6px;border-radius:50%;background:#5f6368"></div>
<div class="a" style="left:22px;top:1366px;width:6px;height:6px;border-radius:50%;background:#5f6368"></div>
<div id="dcon" class="t dt" style="left:67px;top:1347px;color:#202124">Console</div>
<div class="a" style="left:48px;top:1382px;width:128px;height:2px;background:#1a73e8"></div>
<svg style="left:2510px;top:1349px" width="20" height="20" viewBox="0 0 20 20"><path d="M1.5 1.5L18.5 18.5M18.5 1.5L1.5 18.5" stroke="#5f6368" stroke-width="2.8"/></svg>

</body></html>
